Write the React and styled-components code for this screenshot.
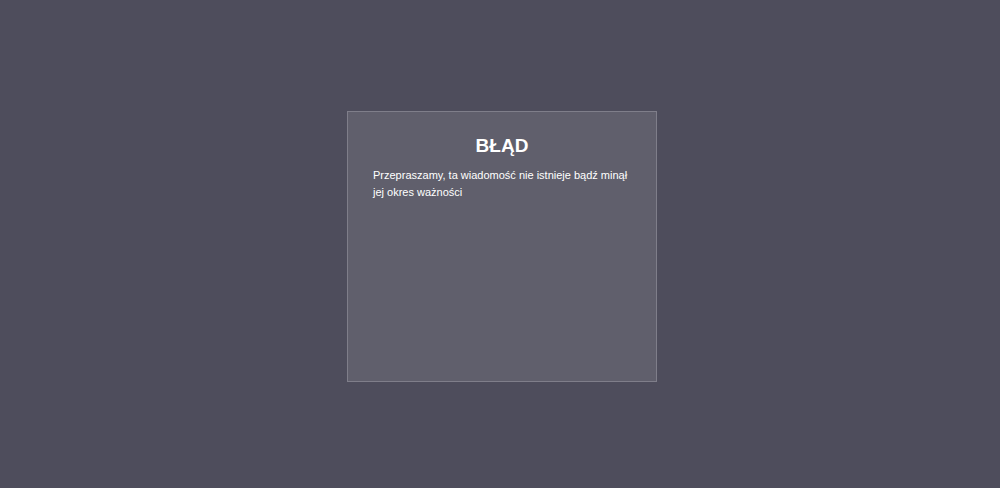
import React from 'react';
import styled, { createGlobalStyle } from 'styled-components';

const GlobalStyle = createGlobalStyle`
    * {
        box-sizing: border-box;
    }

    body {
        margin: 0;
        background-color: #4e4d5c;
        color: #fff;
        font-family: 'Liberation Sans', Arial, sans-serif;
    }
`;

const Page = styled.main`
    display: flex;
    align-items: center;
    justify-content: center;
    min-height: 100vh;
    padding: 9px 0 4px 4px;
`;

const MessageBox = styled.section`
    width: 100%;
    max-width: 310px;
    min-height: 271px;
    padding: 23px 25px;
    background-color: #605f6c;
    border: 1px solid #7f7e8a;
`;

const Title = styled.h1`
    margin: 0 0 10px;
    font-size: 19px;
    line-height: 22px;
    text-align: center;
`;

const Message = styled.p`
    margin: 0;
    font-size: 11px;
    line-height: 17px;
`;

export default function App() {
    return (
        <>
            <GlobalStyle />
            <Page>
                <MessageBox>
                    <Title>BŁĄD</Title>
                    <Message>Przepraszamy, ta wiadomość nie istnieje bądź minął jej okres ważności</Message>
                </MessageBox>
            </Page>
        </>
    );
}
